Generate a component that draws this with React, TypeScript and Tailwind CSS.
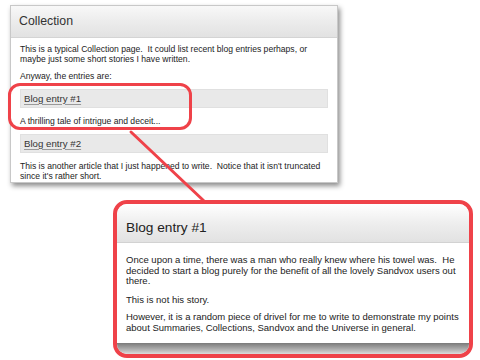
export default function App() {
  const red = "border-[#ef4249]";
  return (
    <div className="relative w-[480px] h-[360px] overflow-hidden bg-white font-['Liberation_Sans',Arial,sans-serif] text-[#222]">
      {/* small page window */}
      <div className="absolute left-[10px] top-[5px] w-[328px] h-[178px] bg-white border border-[#c8c8c8] shadow-[2px_3px_5px_rgba(0,0,0,0.45)]">
        <div className="h-[32px] flex items-center pl-[8px] bg-gradient-to-b from-[#f8f8f8] via-[#ececec] to-[#e2e2e2] border-b border-[#d4d4d4]">
          <span className="text-[12.3px] text-[#333]">Collection</span>
        </div>
        <div className="px-[9px] pt-[6px] text-[8.6px] leading-[10px]">
          <p className="whitespace-pre">{"This is a typical Collection page.  It could list recent blog entries perhaps, or"}</p>
          <p className="whitespace-pre">maybe just some short stories I have written.</p>
          <p className="mt-[7px]">Anyway, the entries are:</p>
          <div className="mt-[8px] h-[19px] flex items-center pl-[3px] bg-[#e9e9e9] border border-[#e0e0e0]">
            <span className="text-[9.7px] text-[#333] underline decoration-[#999] underline-offset-2">Blog entry #1</span>
          </div>
          <p className="mt-[8px]">A thrilling tale of intrigue and deceit...</p>
          <div className="mt-[8px] h-[19px] flex items-center pl-[3px] bg-[#e9e9e9] border border-[#e0e0e0]">
            <span className="text-[9.7px] text-[#333] underline decoration-[#999] underline-offset-2">Blog entry #2</span>
          </div>
          <p className="mt-[8px] whitespace-pre">{"This is another article that I just happened to write.  Notice that it isn't truncated"}</p>
          <p className="whitespace-pre">since it's rather short.</p>
        </div>
      </div>

      {/* highlight around entry #1 */}
      <div className={`absolute left-[8px] top-[83px] w-[184px] h-[47px] rounded-[12px] border-[3px] ${red}`} />

      {/* connector */}
      <svg className="absolute left-0 top-0" width="480" height="360">
        <line x1="131" y1="132" x2="204" y2="201" stroke="#ef4249" strokeWidth="3" strokeLinecap="round" />
      </svg>

      {/* zoomed callout */}
      <div className={`absolute left-[113px] top-[200px] w-[360px] h-[158px] rounded-[14px] border-[4px] ${red} overflow-hidden bg-white`}>
        <div className="flex flex-col h-full">
          <div className="h-[39px] flex items-end pb-[3px] pl-[9px] bg-gradient-to-b from-[#ffffff] via-[#eeeeee] to-[#e2e2e2] border-b border-[#d2d2d2]">
            <span className="text-[13.7px] text-[#222]">Blog entry #1</span>
          </div>
          <div className="flex-1 px-[9px] pt-[12px] text-[9.5px] leading-[10.5px]">
            <p className="whitespace-pre">{"Once upon a time, there was a man who really knew where his towel was.  He"}</p>
            <p className="whitespace-pre">decided to start a blog purely for the benefit of all the lovely Sandvox users out</p>
            <p>there.</p>
            <p className="mt-[8px]">This is not his story.</p>
            <p className="mt-[7px] whitespace-pre">However, it is a random piece of drivel for me to write to demonstrate my points</p>
            <p className="whitespace-pre">about Summaries, Collections, Sandvox and the Universe in general.</p>
          </div>
          <div className="h-[11px] bg-gradient-to-b from-[#7a7a7a] via-[#a8a8a8] to-[#dcdcdc]" />
        </div>
      </div>
    </div>
  );
}
